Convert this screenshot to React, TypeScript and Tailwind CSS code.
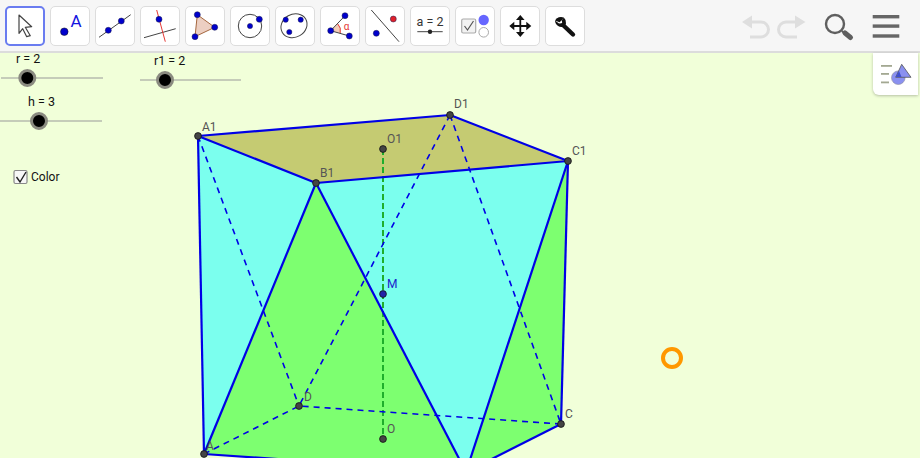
import React from "react";

const BLUE = "#0000e6";
const TOOL_BLUE = "#0000cc";

const Dot = ({ x, y, r = 3, fill = TOOL_BLUE }: { x: number; y: number; r?: number; fill?: string }) => (
  <circle cx={x} cy={y} r={r} fill={fill} stroke="#1a1a4a" strokeWidth={0.5} />
);

const tools: React.ReactNode[] = [
  <path d="M14 9L26.7 20.7L20.3 21.3L25.3 29.7L21.7 30.7L17.7 22.7L14 27.3Z" fill="#fff" stroke="#444" strokeWidth={1.2} strokeLinejoin="round" />,
  <>
    <circle cx={14.3} cy={25.7} r={3.8} fill={TOOL_BLUE} stroke="#111" strokeWidth={0.5} />
    <text x={26} y={20.5} fontSize={17} fill="#1414e0" textAnchor="middle">A</text>
  </>,
  <>
    <line x1={4} y1={31.3} x2={35.7} y2={8.7} stroke="#444" />
    <Dot x={13.3} y={24.3} />
    <Dot x={26.3} y={15} />
  </>,
  <>
    <line x1={4} y1={31.7} x2={35.7} y2={22.7} stroke="#444" />
    <line x1={16.7} y1={4} x2={25.3} y2={35.7} stroke="#e53935" />
    <Dot x={19} y={13.3} />
  </>,
  <>
    <polygon points="12.3,8.7 29.7,21.3 10,30.7" fill="#eccfc2" stroke="#a5673f" />
    <Dot x={12.3} y={8.7} />
    <Dot x={29.7} y={21.3} />
    <Dot x={10} y={30.7} />
  </>,
  <>
    <circle cx={20} cy={20} r={11.7} fill="none" stroke="#444" />
    <Dot x={20} y={20} r={2.6} />
    <Dot x={29.3} y={13.3} />
  </>,
  <>
    <ellipse cx={19} cy={19.7} rx={13.5} ry={11.5} transform="rotate(-30 19 19.7)" fill="none" stroke="#444" />
    <Dot x={10.7} y={13.7} r={2.6} />
    <Dot x={25.7} y={13.7} r={2.6} />
    <Dot x={14.3} y={26} r={2.6} />
  </>,
  <>
    <path d="M10.7 24.7L17.6 17.7A10 10 0 0 1 20.2 27.2Z" fill="#f4cdb8" />
    <path d="M17.6 17.7A10 10 0 0 1 20.2 27.2" fill="none" stroke="#e53935" />
    <line x1={10.7} y1={24.7} x2={25} y2={9.7} stroke="#444" />
    <line x1={10.7} y1={24.7} x2={29.3} y2={30} stroke="#444" />
    <Dot x={25} y={9.7} />
    <Dot x={10.7} y={24.7} />
    <Dot x={29.3} y={30} />
    <text x={26.5} y={23.5} fontSize={10} fill="#e53935" textAnchor="middle">α</text>
  </>,
  <>
    <line x1={6.3} y1={4} x2={34} y2={35.7} stroke="#444" />
    <Dot x={28.3} y={13} fill="#e0202a" />
    <Dot x={11.3} y={27.3} />
  </>,
  <>
    <text x={20} y={20} fontSize={12.5} fill="#333" textAnchor="middle">a = 2</text>
    <line x1={7.3} y1={25.7} x2={32.7} y2={25.7} stroke="#444" />
    <circle cx={20} cy={25.7} r={2.2} fill="#222" />
  </>,
  <>
    <rect x={6.7} y={13} width={14} height={14} rx={1.5} fill="#f2f2f2" stroke="#aaa" strokeWidth={1.2} />
    <path d="M9.5 20L12.5 24L18.5 15" fill="none" stroke="#555" strokeWidth={1.2} />
    <circle cx={28.7} cy={14} r={5.2} fill="#6666ff" />
    <circle cx={28.7} cy={26.3} r={4.8} fill="#fff" stroke="#aaa" />
  </>,
  <>
    <path d="M20.3 12V28M12 20H29" stroke="#111" strokeWidth={1.8} />
    <path d="M20.3 9L16 14H24.6ZM20.3 31L16 26H24.6ZM9.3 20L14.3 15.7V24.3ZM31.3 20L26.3 15.7V24.3Z" fill="#111" />
  </>,
  <>
    <path d="M18 19L28 28.5" stroke="#111" strokeWidth={4.4} strokeLinecap="round" />
    <path d="M18.8 11.6A6.8 6.8 0 0 0 10 14.5L14.5 16.2L16.8 14.3Z" fill="#111" />
    <path d="M10 14.5A6.8 6.8 0 0 0 19.5 20.5L21 17.5A6.8 6.8 0 0 0 18.8 11.6L16.8 14.3L17.2 17.3L14 17.5Z" fill="#111" />
  </>,
];

const solid = [
  [198, 136, 204, 454],
  [198, 136, 316, 183],
  [316, 183, 568, 161],
  [568, 161, 450, 115],
  [450, 115, 198, 136],
  [568, 161, 561, 424],
  [204, 454, 316, 183],
  [316, 183, 466, 472],
  [568, 161, 466, 472],
  [561, 424, 466, 472],
  [204, 454, 466, 472],
];

const dashed = [
  [198, 136, 299, 406],
  [450, 115, 299, 406],
  [450, 115, 561, 424],
  [204, 454, 299, 406],
  [561, 424, 299, 406],
];

const points: [number, number, string, number, number][] = [
  [198, 136, "A1", 4, -5],
  [316, 183, "B1", 4, -6],
  [568, 161, "C1", 4, -6],
  [450, 115, "D1", 4, -7],
  [383, 149, "O1", 4, -6],
  [204, 454, "A", 2, -4],
  [299, 406, "D", 5, -5],
  [561, 424, "C", 4, -6],
  [383, 439, "O", 4, -6],
];

const Slider = ({ label, labelX, labelY, x1, x2, y, knob }: { label: string; labelX: number; labelY: number; x1: number; x2: number; y: number; knob: number }) => (
  <>
    <text x={labelX} y={labelY} fontSize={12.5} fill="#111">{label}</text>
    <line x1={x1} y1={y} x2={x2} y2={y} stroke="#999" />
    <circle cx={knob} cy={y} r={7.5} fill="#000" stroke="#8a8a80" strokeWidth={3} />
  </>
);

export default function App() {
  return (
    <div className="flex h-[458px] w-[920px] flex-col overflow-hidden bg-[#f1ffd9] font-['Roboto',sans-serif]">
      <div className="flex h-[53px] shrink-0 items-start border-b-2 border-[#dcdcdc] bg-[#f6f6f6] pl-[5px] pt-[6px]">
        <div className="flex gap-[5px]">
          {tools.map((icon, i) => (
            <button
              key={i}
              className={
                i === 0
                  ? "h-10 w-10 rounded-[5px] border-2 border-[#6a7cf0] bg-white"
                  : "h-10 w-10 rounded-[5px] border border-[#dddddd] bg-white"
              }
            >
              <svg width="40" height="40" viewBox="0 0 40 40" className={i === 0 ? "-m-[2px]" : "-m-px"}>
                {icon}
              </svg>
            </button>
          ))}
        </div>
        <svg width="70" height="40" viewBox="740 6 70 40" className="ml-[155px]">
          <path d="M752 22H761A7.5 7.5 0 0 1 761 37H750" fill="none" stroke="#dedede" strokeWidth={3} />
          <path d="M742 22L752 15.5V28.5Z" fill="#dedede" />
          <path d="M795 22H786A7.5 7.5 0 0 0 786 37H797" fill="none" stroke="#dedede" strokeWidth={3} />
          <path d="M805.5 22L795 15.5V28.5Z" fill="#dedede" />
        </svg>
        <svg width="100" height="40" viewBox="820 6 100 40" className="ml-[10px]">
          <circle cx={835} cy={24} r={9} fill="none" stroke="#5f5f5f" strokeWidth={2.4} />
          <line x1={842} y1={31} x2={845} y2={34} stroke="#5f5f5f" strokeWidth={2} />
          <line x1={845} y1={33} x2={850.5} y2={37.5} stroke="#5f5f5f" strokeWidth={5} strokeLinecap="round" />
          <rect x={872.7} y={15} width={26.6} height={3.4} fill="#666" />
          <rect x={872.7} y={24.4} width={26.6} height={3.4} fill="#666" />
          <rect x={872.7} y={34.3} width={26.6} height={3.4} fill="#666" />
        </svg>
      </div>

      <div className="relative flex-1">
        <svg className="absolute inset-0" width="920" height="405" viewBox="0 53 920 405">
          <polygon points="198,136 316,183 568,161 450,115" fill="#c5cb72" />
          <polygon points="198,136 204,454 316,183" fill="#7bffee" />
          <polygon points="204,454 466,472 561,424 299,406" fill="#7dff70" />
          <polygon points="204,454 316,183 466,472" fill="#7dff70" />
          <polygon points="568,161 561,424 466,472" fill="#7dff70" />
          <polygon points="316,183 568,161 466,472" fill="#7bffee" />

          <line x1={383} y1={149} x2={383} y2={439} stroke="#1fae2c" strokeWidth={2} strokeDasharray="6 3" />
          {dashed.map((l, i) => (
            <line key={i} x1={l[0]} y1={l[1]} x2={l[2]} y2={l[3]} stroke={BLUE} strokeWidth={1.6} strokeDasharray="6 5" />
          ))}
          {solid.map((l, i) => (
            <line key={i} x1={l[0]} y1={l[1]} x2={l[2]} y2={l[3]} stroke={BLUE} strokeWidth={2.2} />
          ))}

          {points.map(([x, y, name, dx, dy]) => (
            <g key={name}>
              <circle cx={x} cy={y} r={3.4} fill="#444" stroke="#111" strokeWidth={0.8} />
              <text x={x + dx} y={y + dy} fontSize={12} fill="#555">{name}</text>
            </g>
          ))}
          <circle cx={383} cy={294} r={3.4} fill="#2323a8" stroke="#111" strokeWidth={0.8} />
          <text x={387} y={288} fontSize={12} fill="#1c1ccc">M</text>

          <Slider label="r = 2" labelX={16} labelY={63} x1={1} x2={103} y={78} knob={27.3} />
          <Slider label="r1 = 2" labelX={154} labelY={65} x1={140} x2={241} y={80} knob={165} />
          <Slider label="h = 3" labelX={28} labelY={106} x1={0} x2={102} y={121} knob={39} />

          <rect x={14} y={170.5} width={13} height={13} rx={1.5} fill="#f7f7f7" stroke="#888" strokeWidth={1.2} />
          <path d="M16.5 177L20 182L26 172" fill="none" stroke="#222" strokeWidth={1.4} />
          <text x={31} y={181} fontSize={12} fill="#111">Color</text>

          <circle cx={672} cy={358} r={9} fill="none" stroke="#ff9800" strokeWidth={4} />
        </svg>

        <div className="absolute right-[2px] top-0 flex h-[42px] w-[45px] items-center justify-center rounded-bl-md bg-white shadow-[0_1px_3px_rgba(0,0,0,0.25)]">
          <svg width="45" height="42" viewBox="873 53 45 42">
            <rect x={881} y={65} width={11} height={1.8} fill="#a3a892" />
            <rect x={881} y={73} width={8} height={1.8} fill="#a3a892" />
            <rect x={881} y={81.5} width={8} height={1.8} fill="#a3a892" />
            <circle cx={898.3} cy={77.7} r={6.8} fill="#8a90f0" stroke="#8a8a9a" strokeWidth={0.6} />
            <polygon points="901.7,64.3 911,77.3 895.7,77.3" fill="#8a90f0" stroke="#555" strokeWidth={0.8} />
            <polygon points="899,71 901.5,77 895.7,77" fill="#3f4fd0" />
          </svg>
        </div>
      </div>
    </div>
  );
}
